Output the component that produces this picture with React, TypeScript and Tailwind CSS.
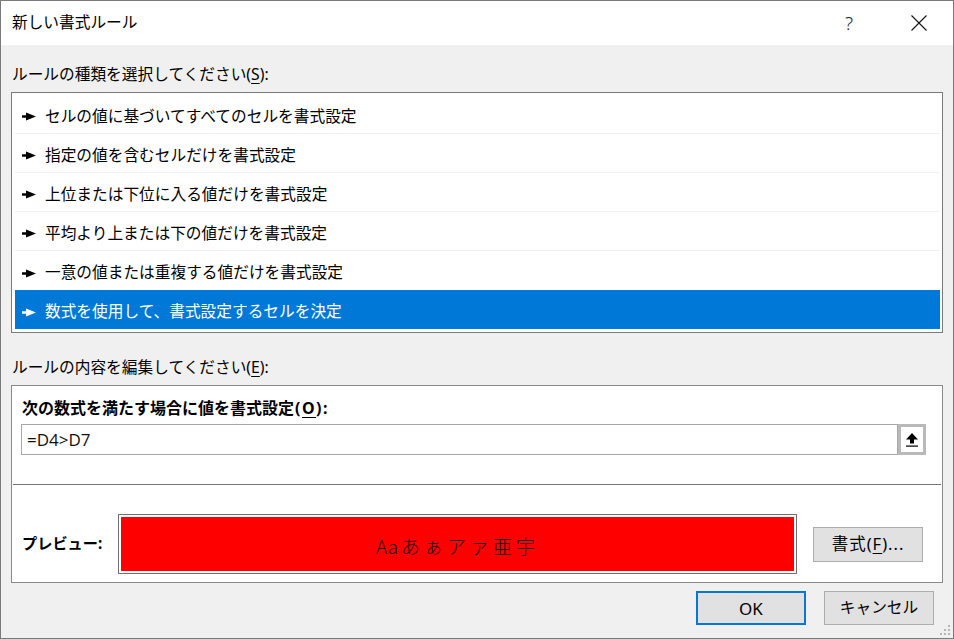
import React from 'react';

const rules = [
  'セルの値に基づいてすべてのセルを書式設定',
  '指定の値を含むセルだけを書式設定',
  '上位または下位に入る値だけを書式設定',
  '平均より上または下の値だけを書式設定',
  '一意の値または重複する値だけを書式設定',
  '数式を使用して、書式設定するセルを決定',
];

function Pointer({ color }: { color: string }) {
  // the small "►" bullet in front of each rule type
  return (
    <svg width="14" height="9" viewBox="0 0 14 9" className="shrink-0">
      <path d="M0 3.3 H4 V0.5 L14 4.5 L4 8.5 V5.7 H0 Z" fill={color} />
    </svg>
  );
}

function Mnemonic({ k }: { k: string }) {
  return <span className="underline underline-offset-[3px] decoration-1">{k}</span>;
}

export default function App() {
  const selected = 5;

  return (
    <div className="relative w-[954px] h-[639px] border border-[#7a7a7a] bg-[#f0f0f0] text-[15.7px] text-black font-['Noto_Sans','Noto_Sans_CJK_JP',sans-serif] leading-none flex flex-col overflow-hidden">
      {/* Title bar */}
      <div className="h-[44px] bg-white flex items-center pl-[11px]">
        <span className="leading-none">新しい書式ルール</span>
        <div className="ml-auto flex items-center h-full">
          <span className="w-[46px] text-center text-[19px] font-light text-[#222]">?</span>
          <span className="w-[24px]" />
          <span className="w-[46px] flex justify-center">
            <svg width="16" height="16" viewBox="0 0 16 16">
              <path d="M0.5 0.5 L15.5 15.5 M15.5 0.5 L0.5 15.5" stroke="#111" strokeWidth="1.1" />
            </svg>
          </span>
          <span className="w-[11px]" />
        </div>
      </div>

      <div className="flex flex-col px-[10px]">
        <div className="h-[30px] mt-[15px] flex items-center pl-[1px]">
          ルールの種類を選択してください(<Mnemonic k="S" />):
        </div>

        {/* Rule type list */}
        <div className="mt-[2px] border border-[#7a7a7a] bg-white pt-[2px] pb-[3px] pl-[3px] pr-[2px]">
          {rules.map((r, i) => {
            const active = i === selected;
            return (
              <div
                key={r}
                className={`h-[39px] flex items-center gap-[9px] pl-[7px] pt-[5px] ${
                  active ? 'bg-[#0078d7] text-white' : 'text-black'
                } ${i < rules.length - 2 ? 'border-b border-[#f0f0f0]' : ''}`}
              >
                <Pointer color={active ? '#fff' : '#000'} />
                <span>{r}</span>
              </div>
            );
          })}
        </div>

        <div className="h-[30px] mt-[20px] flex items-center pl-[1px]">
          ルールの内容を編集してください(<Mnemonic k="E" />):
        </div>

        {/* Rule description */}
        <div className="mt-[2px] h-[198px] border border-[#8a8a8a] bg-white flex flex-col">
          <div className="h-[30px] mt-[7px] flex items-center pl-[10px] font-bold text-[16px]">
            次の数式を満たす場合に値を書式設定
            <span className="tracking-[1.5px] ml-[1px]">
              (<Mnemonic k="O" />):
            </span>
          </div>
          <div className="mt-[1px] h-[31px] flex ml-[9px] mr-[16px]">
            <div className="flex-1 border border-[#a8a8a8] flex items-center pl-[5px] text-[17px] font-['Open_Sans',sans-serif] text-[#111]">
              =D4&gt;D7
            </div>
            <div className="w-[28px] border-[3px] border-[#b9b9b9] bg-white flex items-center justify-center">
              <svg width="12" height="14" viewBox="0 0 12 14">
                <path d="M6 0 L0 6.5 H4 V10.5 H8 V6.5 H12 Z" fill="#000" />
                <rect x="0" y="12.5" width="12" height="1.2" fill="#000" />
              </svg>
            </div>
          </div>
          <div className="mt-[29px] mx-[1px] h-px bg-[#777]" />
          <div className="mt-[29px] h-[60px] flex items-center pl-[10px]">
            <span className="w-[96px] font-bold text-[15.2px]">プレビュー:</span>
            <div className="w-[679px] h-full border border-[#707070] p-[2px]">
              <div className="h-full bg-[#ff0000] flex items-center justify-center pt-[2px] text-[19px] font-light text-[#1a0000] font-['Noto_Sans_CJK_JP',sans-serif]">
                <span>Aa</span>
                <span className="tracking-[4px] ml-[3px]">あぁアァ亜宇</span>
              </div>
            </div>
            <button className="ml-[16px] w-[110px] h-[35px] bg-[#e1e1e1] border border-[#adadad] flex items-center justify-center pt-[1px] text-[16.5px] tracking-[1px]">
              書式(<Mnemonic k="F" />)...
            </button>
          </div>
        </div>

        {/* Dialog buttons */}
        <div className="mt-[8px] flex justify-end gap-[18px] pr-[9px]">
          <button className="w-[110px] h-[34px] bg-[#e1e1e1] border-2 border-[#0078d7] flex items-center justify-center text-[17px]">
            OK
          </button>
          <button className="w-[110px] h-[34px] bg-[#e1e1e1] border border-[#adadad] flex items-center justify-center">
            キャンセル
          </button>
        </div>
      </div>

      {/* Size grip */}
      <svg width="12" height="12" viewBox="0 0 12 12" className="absolute right-[2px] bottom-[2px]">
        <rect x="9" y="1" width="2" height="2" fill="#b5b5b5" />
        <rect x="5" y="5" width="2" height="2" fill="#b5b5b5" />
        <rect x="9" y="5" width="2" height="2" fill="#b5b5b5" />
        <rect x="1" y="9" width="2" height="2" fill="#b5b5b5" />
        <rect x="5" y="9" width="2" height="2" fill="#b5b5b5" />
        <rect x="9" y="9" width="2" height="2" fill="#b5b5b5" />
      </svg>
    </div>
  );
}
